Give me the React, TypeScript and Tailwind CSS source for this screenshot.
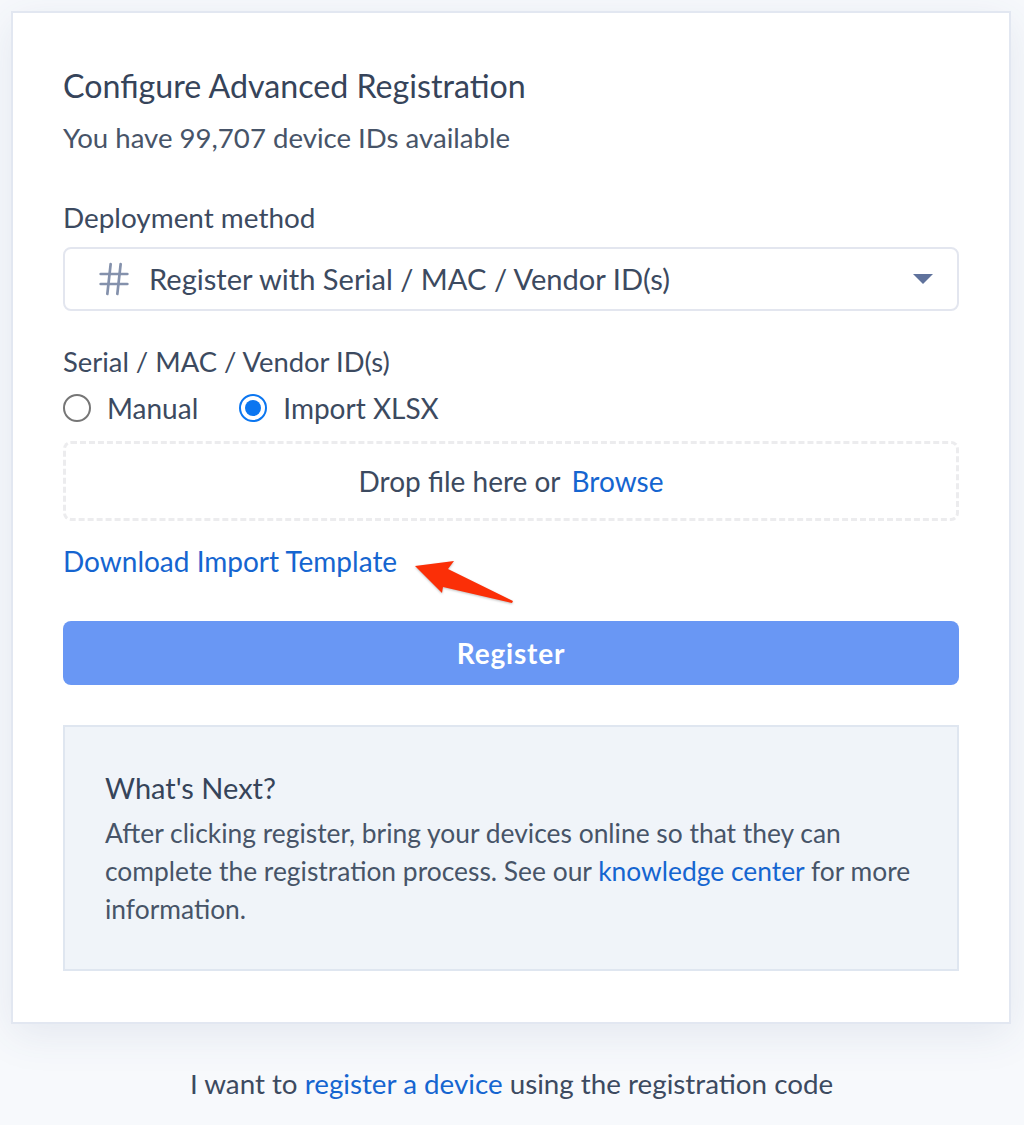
import { Hash } from 'lucide-react'

function Radio({ checked, label }: { checked?: boolean; label: string }) {
  return (
    <label className="flex items-center gap-[16px]">
      {checked ? (
        <span className="flex h-[28px] w-[28px] items-center justify-center rounded-full border-2 border-[#0b76f0] bg-white">
          <span className="h-[16px] w-[16px] rounded-full bg-[#0b76f0]" />
        </span>
      ) : (
        <span className="h-[28px] w-[28px] rounded-full border-2 border-[#767676] bg-white" />
      )}
      <span>{label}</span>
    </label>
  )
}

export default function App() {
  return (
    <div className="relative flex min-h-[1125px] flex-col items-start bg-[#f7f9fc] pt-[11px] font-['Lato',sans-serif] text-[28px] leading-[38px] text-[#3c4a60]">
      {/* 主卡片 */}
      <div className="relative ml-[11px] w-[1000px] border-2 border-[#e2e7f1] bg-white px-[50px] pt-[53px] pb-[51px] shadow-[0_10px_40px_rgba(60,80,130,0.1)]">
        <h1 className="text-[32.2px] leading-[40px] text-[#36445a]">Configure Advanced Registration</h1>
        <p className="mt-[13px] text-[27.6px] text-[#475468]">You have 99,707 device IDs available</p>

        <div className="mt-[41px] text-[27.9px]">Deployment method</div>
        <div className="mt-[11px] flex h-[64px] items-center rounded-[8px] border-2 border-[#e3e6ef] pr-[24px] pl-[29px]">
          <Hash className="h-[40px] w-[40px] text-[#8491ac]" strokeWidth={1.6} />
          <span className="ml-[15px] flex-1 text-[29.1px]">Register with Serial / MAC / Vendor ID(s)</span>
          <span className="h-0 w-0 border-x-[10px] border-t-[10px] border-x-transparent border-t-[#5f729c]" />
        </div>

        <div className="mt-[32px] text-[27.4px]">Serial / MAC / Vendor ID(s)</div>
        <div className="mt-[8px] flex gap-[41px]">
          <Radio label="Manual" />
          <Radio checked label="Import XLSX" />
        </div>

        <div className="mt-[14px] flex h-[80px] items-center justify-center rounded-[8px] border-[3px] border-dashed border-[#ececee]">
          Drop file here or <a className="ml-[11px] text-[#1565d0]">Browse</a>
        </div>

        <a className="mt-[21px] block text-[#1565d0]">Download Import Template</a>

        <button className="mt-[41px] block h-[64px] w-full rounded-[8px] bg-[#6997f4] text-[28px] font-bold tracking-[0.8px] text-white">
          Register
        </button>

        <div className="mt-[40px] h-[246px] border-2 border-[#dfe6f0] bg-[#f0f4f9] px-[40px] pt-[42px]">
          <h2 className="text-[29px] leading-[38px] text-[#36445a]">What's Next?</h2>
          <p className="mt-[7px] text-[26.4px] text-[#475468]">
            After clicking register, bring your devices online so that they can complete the registration process. See our{' '}
            <a className="text-[#1565d0]">knowledge center</a> for more information.
          </p>
        </div>

        {/* 红色箭头标注 */}
        <svg className="absolute top-[545px] left-[400px] drop-shadow-[0_1px_1px_rgba(0,0,0,0.25)]" width="106" height="50" viewBox="0 0 106 50">
          <path d="M2 8 L41 3 L35 11 L100 43 L99 45 L30 29 L29 35 Z" fill="#fb2f07" />
        </svg>
      </div>

      <p className="mt-[41px] w-full pr-[1px] text-center text-[27.75px]">
        I want to <a className="text-[#1565d0]">register a device</a> using the registration code
      </p>
    </div>
  )
}
